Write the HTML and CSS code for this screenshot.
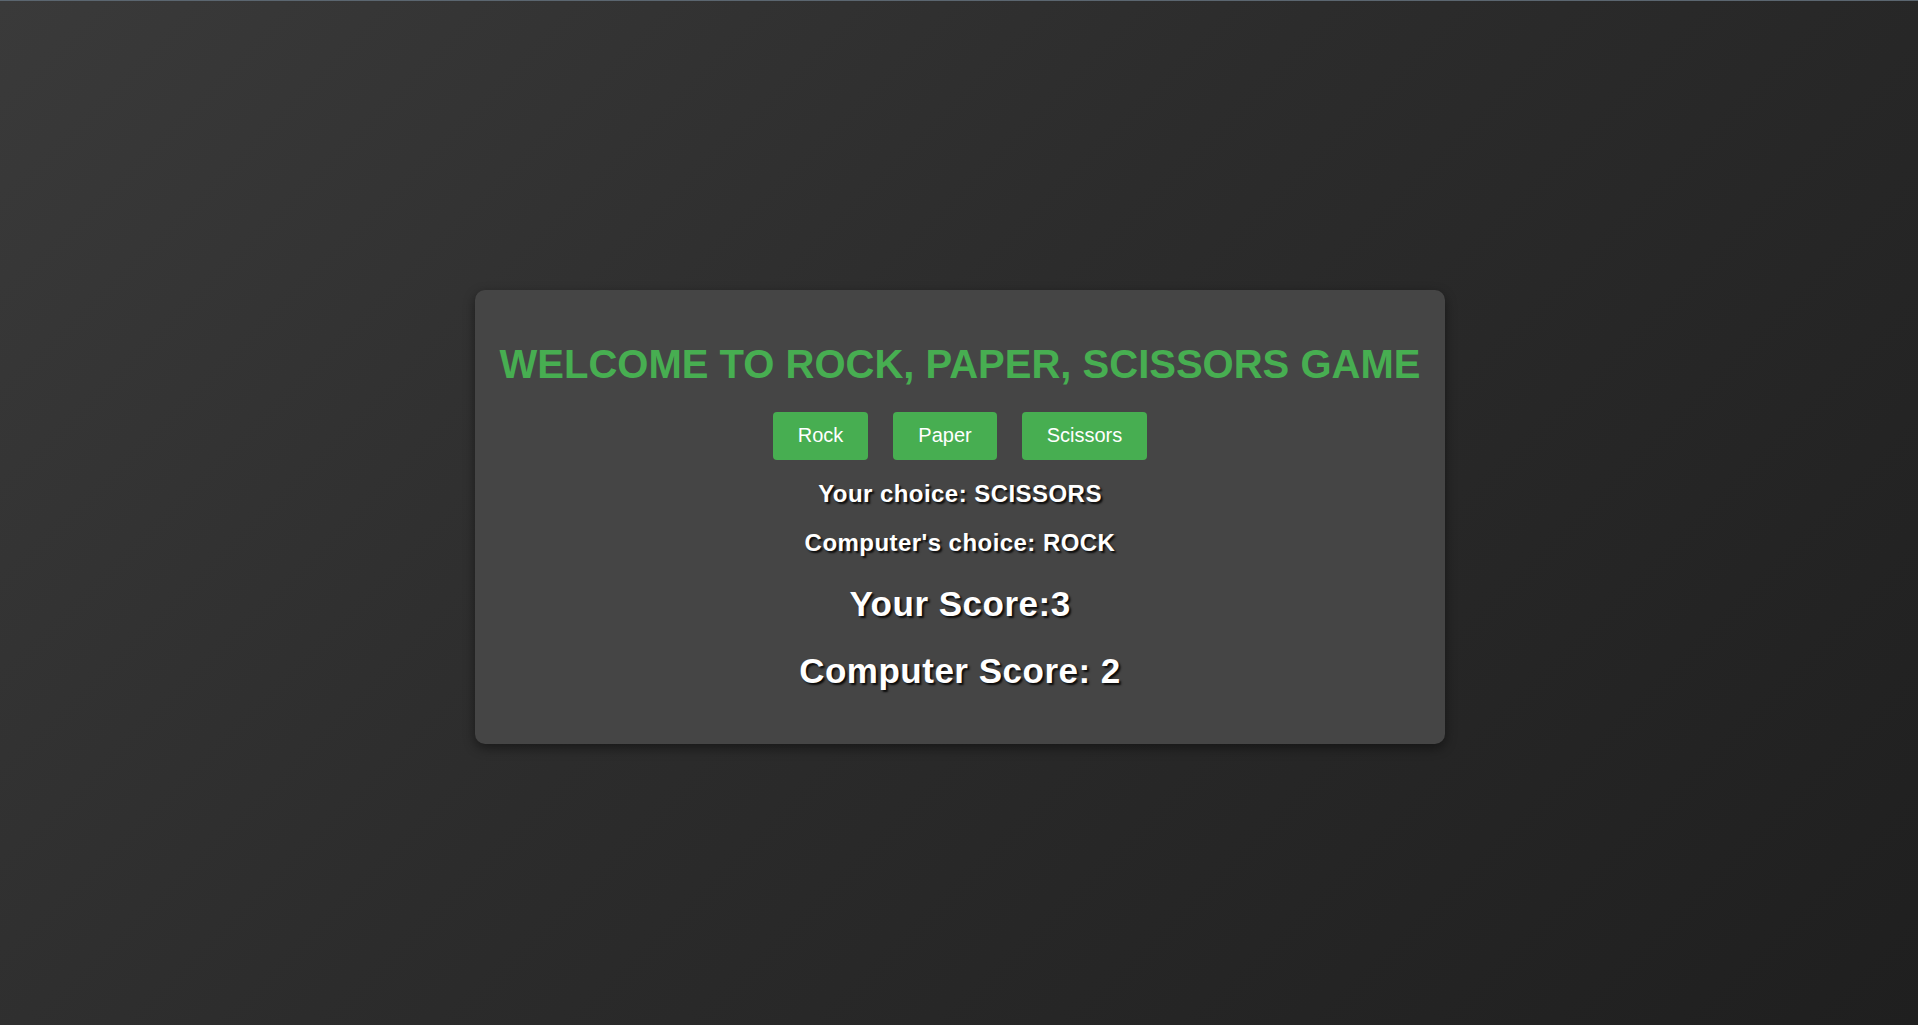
FILE: index.html
```html
<!DOCTYPE html>
<html lang="en">
<head>
<meta charset="utf-8">
<title>Rock, Paper, Scissors</title>
<link rel="stylesheet" href="styles.css">
</head>
<body>
<main class="page">
  <section class="card">
    <h1 class="title">WELCOME TO ROCK, PAPER, SCISSORS GAME</h1>
    <div class="choices">
      <button class="btn" type="button">Rock</button>
      <button class="btn" type="button">Paper</button>
      <button class="btn" type="button">Scissors</button>
    </div>
    <p class="pick pick-user">Your choice: SCISSORS</p>
    <p class="pick pick-computer">Computer's choice: ROCK</p>
    <h2 class="score score-user">Your Score:3</h2>
    <h2 class="score score-computer">Computer Score: 2</h2>
  </section>
</main>
</body>
</html>
```

FILE: styles.css
```css
* {
  box-sizing: border-box;
}

html, body {
  margin: 0;
  padding: 0;
  height: 100%;
}

body {
  font-family: "Liberation Sans", Arial, sans-serif;
  background: linear-gradient(135deg, #3a3a3a 0%, #2c2c2c 45%, #1f1f1f 100%);
  border-top: 1px solid #5b6670;
  color: #fff;
}

.page {
  min-height: 100%;
  display: flex;
  align-items: center;
  justify-content: center;
  padding-top: 8px;
  padding-left: 2px;
}

.card {
  width: 970px;
  background: #454545;
  border-radius: 10px;
  box-shadow: 0 4px 12px rgba(0, 0, 0, 0.45);
  padding: 51px 23px 53px;
  text-align: center;
}

.title {
  margin: 0;
  font-size: 40px;
  line-height: 46px;
  font-weight: bold;
  color: #47ae51;
  white-space: nowrap;
}

.choices {
  margin-top: 25px;
  display: flex;
  justify-content: center;
  gap: 25px;
}

.btn {
  font-family: "Liberation Sans", Arial, sans-serif;
  font-size: 20px;
  line-height: 24px;
  padding: 11px 25px 13px;
  border: none;
  border-radius: 4px;
  background: #47ae51;
  color: #fff;
  cursor: pointer;
}

.pick {
  margin: 0;
  font-size: 24px;
  line-height: 28px;
  font-weight: bold;
  letter-spacing: 0.45px;
  text-shadow: 2px 2px 2px rgba(0, 0, 0, 0.85);
}

.pick-user {
  margin-top: 20px;
}

.pick-computer {
  margin-top: 21px;
}

.score {
  margin: 0;
  font-size: 35px;
  line-height: 40px;
  font-weight: bold;
  letter-spacing: 0.5px;
  text-shadow: 2px 2px 2px rgba(0, 0, 0, 0.85);
}

.score-user {
  margin-top: 27px;
}

.score-computer {
  margin-top: 27px;
}
```
